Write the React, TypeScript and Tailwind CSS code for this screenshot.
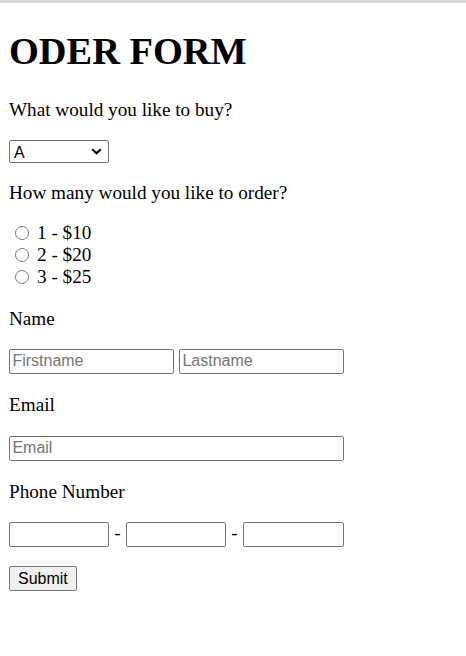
import { useState } from 'react';

const inputCls =
  "h-[25px] border border-[#767676] rounded-[2px] px-[2.4px] text-[16px] leading-[23px] text-black bg-white font-['Liberation_Sans',Arial,sans-serif] placeholder:text-[#757575] outline-none";

export default function App() {
  const [qty, setQty] = useState<string>('');

  const options = [
    { value: '1', label: '1 - $10' },
    { value: '2', label: '2 - $20' },
    { value: '3', label: '3 - $25' },
  ];

  return (
    <div className="min-h-[656px] bg-white text-black font-['Liberation_Serif','Times_New_Roman',serif]">
      <div className="h-[3px] bg-[#d6d6d6]" />
      <form className="flex flex-col items-start pl-[9px]" onSubmit={(e) => e.preventDefault()}>
        <h1 className="mt-[26px] text-[38.4px] leading-[44px] font-bold">ODER FORM</h1>

        <p className="mt-[25.5px] text-[19.2px] leading-[22px]">What would you like to buy?</p>

        {/* product select */}
        <div className="relative mt-[19px] w-[100px] h-[23px]">
          <select className="appearance-none w-full h-full border border-[#767676] rounded-[2px] pl-[4px] text-[16px] bg-white font-['Liberation_Sans',Arial,sans-serif] outline-none">
            <option>A</option>
            <option>B</option>
            <option>C</option>
          </select>
          <svg
            className="pointer-events-none absolute right-[7px] top-[8px] w-[11px] h-[7px]"
            viewBox="0 0 11 7"
            fill="none"
          >
            <path d="M1.2 1.2 L5.5 5.3 L9.8 1.2" stroke="#000" strokeWidth="2.2" />
          </svg>
        </div>

        <p className="mt-[19px] text-[19.2px] leading-[22px]">How many would you like to order?</p>

        <div className="mt-[19px] flex flex-col">
          {options.map((o) => (
            <label key={o.value} className="flex items-center h-[22px] text-[19.2px] cursor-pointer">
              <input
                type="radio"
                name="qty"
                value={o.value}
                checked={qty === o.value}
                onChange={() => setQty(o.value)}
                className="sr-only"
              />
              <span className="shrink-0 ml-[6px] mr-[8px] -mt-[1px] w-[14px] h-[14px] rounded-full border border-[#7a7a7a] bg-white flex items-center justify-center">
                {qty === o.value && <span className="w-[8px] h-[8px] rounded-full bg-[#0075ff]" />}
              </span>
              {o.label}
            </label>
          ))}
        </div>

        <p className="mt-[19px] text-[19.2px] leading-[22px]">Name</p>
        <div className="mt-[19px] flex gap-[5px]">
          <input className={`${inputCls} w-[165px]`} placeholder="Firstname" />
          <input className={`${inputCls} w-[165px]`} placeholder="Lastname" />
        </div>

        <p className="mt-[20.5px] text-[19.2px] leading-[22px]">Email</p>
        <input className={`${inputCls} mt-[19.7px] w-[335px]`} placeholder="Email" />

        <p className="mt-[20.5px] text-[19.2px] leading-[22px]">Phone Number</p>
        <div className="mt-[18.5px] flex items-center">
          <input className={`${inputCls} w-[100px]`} />
          <span className="w-[17px] text-center text-[19.2px] leading-[22px] -mt-[3px]">-</span>
          <input className={`${inputCls} w-[100px]`} />
          <span className="w-[17px] text-center text-[19.2px] leading-[22px] -mt-[3px]">-</span>
          <input className={`${inputCls} w-[101px]`} />
        </div>

        <button
          type="submit"
          className="mt-[19.3px] h-[25px] px-[8px] bg-[#efefef] border border-[#767676] rounded-[2px] text-[16px] text-black font-['Liberation_Sans',Arial,sans-serif]"
        >
          Submit
        </button>
      </form>
    </div>
  );
}
